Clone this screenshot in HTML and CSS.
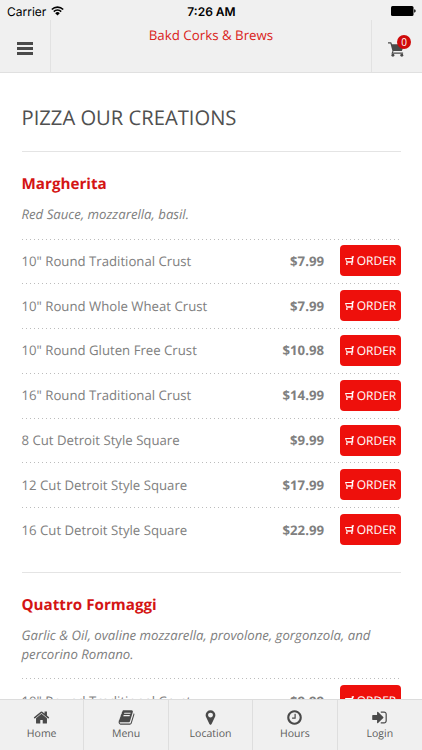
FILE: index.html
```html
<!DOCTYPE html>
<html lang="en">
<head>
    <meta charset="UTF-8">
    <meta name="viewport" content="width=device-width, initial-scale=1.0">
    <title>Bakd Corks &amp; Brews</title>
    <link rel="stylesheet" href="styles.css">
</head>
<body>
    <svg class="sprite" aria-hidden="true">
        <symbol id="cart" viewBox="0 0 16 14">
            <path d="M0 .2h3l.8 1.9H15.5L13 8.3H5.2l-.6 1.6h9.6v1.2H3.2l1-2.6L2.3 1.4H0z"/>
            <circle cx="4.6" cy="12.5" r="1.4"/>
            <circle cx="13" cy="12.5" r="1.4"/>
        </symbol>
        <symbol id="cart-small" viewBox="0 0 9 9">
            <path d="M9 .2v1.2H8.2v5.3H1.3V5.9L0 2h6.7V.2zM1.3 3.1l.5 2.1h4.9V3.1z"/>
            <circle cx="1.9" cy="8" r=".9"/>
            <circle cx="6.9" cy="8" r=".9"/>
        </symbol>
    </svg>

    <!-- Status bar -->
    <div class="status">
        <div class="carrier">Carrier
            <svg class="wifi" viewBox="0 0 13 10">
                <path d="M.8 3.5a8 8 0 0 1 11.4 0M2.8 5.6a5.2 5.2 0 0 1 7.4 0"/>
                <path class="fill" d="M6.5 9.6 4.2 7.2a3.3 3.3 0 0 1 4.6 0z"/>
            </svg>
        </div>
        <div class="time">7:26 AM</div>
        <div class="power">
            <svg class="battery" viewBox="0 0 25 10">
                <rect x="0" y="0" width="22.5" height="10" rx="1.5"/>
                <path d="M23.2 3.3q1.5.3 1.5 1.7t-1.5 1.7z"/>
            </svg>
        </div>
    </div>

    <!-- Header -->
    <header class="header">
        <button class="header-btn menu-btn" aria-label="Menu"><span class="bars"></span></button>
        <div class="brand">Bakd Corks &amp; Brews</div>
        <button class="header-btn cart-btn" aria-label="Cart">
            <svg class="cart-icon"><use href="#cart"/></svg>
            <span class="badge">0</span>
        </button>
    </header>

    <main class="content">
        <h1>PIZZA OUR CREATIONS</h1>

        <section class="item">
            <h2>Margherita</h2>
            <p class="desc">Red Sauce, mozzarella, basil.</p>
            <div class="row"><span class="name">10" Round Traditional Crust</span><span class="price">$7.99</span><a class="order"><svg><use href="#cart-small"/></svg>ORDER</a></div>
            <div class="row"><span class="name">10" Round Whole Wheat Crust</span><span class="price">$7.99</span><a class="order"><svg><use href="#cart-small"/></svg>ORDER</a></div>
            <div class="row"><span class="name">10" Round Gluten Free Crust</span><span class="price">$10.98</span><a class="order"><svg><use href="#cart-small"/></svg>ORDER</a></div>
            <div class="row"><span class="name">16" Round Traditional Crust</span><span class="price">$14.99</span><a class="order"><svg><use href="#cart-small"/></svg>ORDER</a></div>
            <div class="row"><span class="name">8 Cut Detroit Style Square</span><span class="price">$9.99</span><a class="order"><svg><use href="#cart-small"/></svg>ORDER</a></div>
            <div class="row"><span class="name">12 Cut Detroit Style Square</span><span class="price">$17.99</span><a class="order"><svg><use href="#cart-small"/></svg>ORDER</a></div>
            <div class="row"><span class="name">16 Cut Detroit Style Square</span><span class="price">$22.99</span><a class="order"><svg><use href="#cart-small"/></svg>ORDER</a></div>
        </section>

        <section class="item">
            <h2>Quattro Formaggi</h2>
            <p class="desc">Garlic &amp; Oil, ovaline mozzarella, provolone, gorgonzola, and percorino Romano.</p>
            <div class="row"><span class="name">10" Round Traditional Crust</span><span class="price">$9.99</span><a class="order"><svg><use href="#cart-small"/></svg>ORDER</a></div>
        </section>
    </main>

    <!-- Bottom tabs -->
    <nav class="tabs">
        <a class="tab">
            <svg viewBox="0 0 1792 1792"><path d="M1472 992v480q0 26-19 45t-45 19h-384v-384h-256v384h-384q-26 0-45-19t-19-45v-480q0-1 .5-3t.5-3l575-474 575 474q1 2 1 6zm223-69l-62 74q-8 9-21 11h-3q-13 0-21-7l-692-577-692 577q-12 8-24 7-13-2-21-11l-62-74q-8-10-7-23.5t11-21.5l719-599q32-26 76-26t76 26l244 204v-195q0-14 9-23t23-9h192q14 0 23 9t9 23v408l219 182q10 8 11 21.5t-7 23.5z"/></svg>
            Home
        </a>
        <a class="tab">
            <svg viewBox="0 0 1792 1792"><path d="M1703 478q40 57 18 129l-275 906q-19 64-76.5 107.5t-122.5 43.5h-923q-77 0-148.5-53.5t-99.5-131.5q-24-67-2-127 0-4 3-27t4-37q1-8-3-21.5t-3-19.5q2-11 8-21t16.5-23.5 16.5-23.5q23-38 45-91.5t30-91.5q3-10 .5-30t-.5-28q3-11 17-28t17-23q21-36 42-92t25-90q1-9-2.5-32t.5-28q4-13 22-30.5t22-22.5q19-26 42.5-84.5t27.5-96.5q1-8-3-25.5t-2-26.5q2-8 9-18t18-23 17-21q8-12 16.5-30.5t15-35 16-36 19.5-32 26.5-23.5 36-11.5 47.5 5.5l-1 3q38-9 51-9h761q74 0 114 56t18 130l-274 906q-36 119-71.5 153.5t-128.5 34.5h-869q-27 0-38 15-11 16-1 43 24 70 144 70h923q29 0 56-15.5t35-41.5l300-987q7-22 5-57 38 15 59 43zm-1064 2q-4 13 2 22.5t20 9.5h608q13 0 25.5-9.5t16.5-22.5l21-64q4-13-2-22.5t-20-9.5h-608q-13 0-25.5 9.5t-16.5 22.5zm-83 256q-4 13 2 22.5t20 9.5h608q13 0 25.5-9.5t16.5-22.5l21-64q4-13-2-22.5t-20-9.5h-608q-13 0-25.5 9.5t-16.5 22.5z"/></svg>
            Menu
        </a>
        <a class="tab">
            <svg viewBox="0 0 1792 1792"><path d="M1152 640q0-106-75-181t-181-75-181 75-75 181 75 181 181 75 181-75 75-181zm256 0q0 109-33 179l-364 774q-16 33-47.5 52t-67.5 19-67.5-19-46.5-52l-365-774q-33-70-33-179 0-212 150-362t362-150 362 150 150 362z"/></svg>
            Location
        </a>
        <a class="tab">
            <svg viewBox="0 0 1792 1792"><path d="M1024 544v448q0 14-9 23t-23 9h-320q-14 0-23-9t-9-23v-64q0-14 9-23t23-9h224v-352q0-14 9-23t23-9h64q14 0 23 9t9 23zm416 352q0-148-73-273t-198-198-273-73-273 73-198 198-73 273 73 273 198 198 273 73 273-73 198-198 73-273zm224 0q0 209-103 385.5t-279.5 279.5-385.5 103-385.5-103-279.5-279.5-103-385.5 103-385.5 279.5-279.5 385.5-103 385.5 103 279.5 279.5 103 385.5z"/></svg>
            Hours
        </a>
        <a class="tab">
            <svg viewBox="0 0 1792 1792"><path d="M1312 896q0 26-19 45l-544 544q-19 19-45 19t-45-19-19-45v-288h-448q-26 0-45-19t-19-45v-384q0-26 19-45t45-19h448v-288q0-26 19-45t45-19 45 19l544 544q19 19 19 45zm352-352v704q0 119-84.5 203.5t-203.5 84.5h-320q-13 0-22.5-9.5t-9.5-22.5q0-4-1-20t-.5-26.5 3-23.5 10-19.5 20.5-6.5h320q66 0 113-47t47-113v-704q0-66-47-113t-113-47h-312l-11.5-1-11.5-3-8-5.5-7-9-2-13.5q0-4-1-20t-.5-26.5 3-23.5 10-19.5 20.5-6.5h320q119 0 203.5 84.5t84.5 203.5z"/></svg>
            Login
        </a>
    </nav>
</body>
</html>
```
FILE: styles.css
```css
* {
    box-sizing: border-box;
}
body {
    margin: 0;
    height: 750px;
    display: flex;
    flex-direction: column;
    overflow: hidden;
    background: #fff;
    color: #808080;
    font-family: "Open Sans", sans-serif;
    font-size: 13.2px;
    text-rendering: geometricPrecision;
}
.sprite {
    position: absolute;
    width: 0;
    height: 0;
}

/* status bar */
.status {
    flex: none;
    display: grid;
    grid-template-columns: 1fr auto 1fr;
    align-items: center;
    height: 20px;
    padding: 2px 6px 0 7px;
    background: #f0f0f0;
    color: #000;
    font-family: Inter, sans-serif;
    font-size: 12px;
}
.carrier {
    display: flex;
    align-items: center;
    gap: 5px;
}
.wifi {
    width: 13px;
    height: 10px;
    fill: none;
    stroke: #000;
    stroke-width: 1.6;
}
.wifi .fill {
    fill: #000;
    stroke: none;
}
.time {
    font-weight: 600;
}
.power {
    display: flex;
    justify-content: flex-end;
}
.battery {
    width: 25px;
    height: 10px;
}

/* header */
.header {
    flex: none;
    display: flex;
    height: 53px;
    background: #f0f0f0;
    border-bottom: 1px solid #e0e0e0;
}
.header-btn {
    width: 51px;
    padding: 0;
    border: 0;
    background: none;
    display: flex;
    align-items: center;
    justify-content: center;
}
.menu-btn {
    border-right: 1px solid #e2e2e2;
    padding-top: 5px;
}
.cart-btn {
    position: relative;
    border-left: 1px solid #e2e2e2;
    padding: 6px 2px 0 0;
}
.bars {
    width: 16px;
    height: 13px;
    border-top: 3px solid #4a4a4a;
    border-bottom: 3px solid #4a4a4a;
    background: linear-gradient(#4a4a4a, #4a4a4a) center / 100% 3px no-repeat;
}
.brand {
    flex: 1;
    padding-top: 6px;
    text-align: center;
    font-size: 13.3px;
    line-height: 18px;
    color: #da2320;
}
.cart-icon {
    width: 17px;
    height: 15px;
    fill: #4a4a4a;
}
.badge {
    position: absolute;
    top: 15px;
    right: 11px;
    width: 14px;
    height: 14px;
    border-radius: 50%;
    background: #cf0a0a;
    color: #fff;
    font: 10px/14px "Open Sans", sans-serif;
    text-align: center;
}

/* menu list */
.content {
    flex: 1;
    min-height: 0;
    overflow: hidden;
    padding: 30px 21px 0 21.5px;
}
h1 {
    margin: 0;
    padding-bottom: 20px;
    font-size: 20.2px;
    font-weight: 400;
    line-height: 28px;
    color: #505050;
}
.item {
    border-top: 1px solid #e4e4e4;
    padding: 20px 0 20.4px;
}
h2 {
    margin: 0 0 9px;
    font-size: 15.2px;
    font-weight: 700;
    line-height: 24px;
    color: #d41414;
}
.desc {
    margin: 0 0 15px;
    font-size: 13.2px;
    font-style: italic;
    line-height: 18.5px;
}
.row {
    display: flex;
    align-items: center;
    height: 44.8px;
    background: repeating-linear-gradient(90deg, #bcbcbc 0 1.5px, transparent 1.5px 4px) top / 100% 1px no-repeat;
}
.name {
    flex: 1;
}
.price {
    margin-right: 16px;
    font-weight: 700;
}
.order {
    display: flex;
    align-items: center;
    justify-content: center;
    gap: 3px;
    width: 61px;
    height: 31px;
    border-radius: 4px;
    background: #ee100c;
    color: #fff;
    font-size: 12px;
}
.order svg {
    width: 9px;
    height: 9px;
    fill: #fff;
}

/* bottom tabs */
.tabs {
    flex: none;
    display: grid;
    grid-template-columns: repeat(5, 1fr);
    height: 51px;
    background: #f0f0f0;
    border-top: 1px solid #dcdcdc;
}
.tab {
    display: flex;
    flex-direction: column;
    align-items: center;
    padding-top: 9px;
    border-right: 1px solid #dedede;
    font-size: 10.5px;
    line-height: 14px;
    color: #5c5c5c;
}
.tab:last-child {
    border-right: 0;
}
.tab svg {
    width: 17px;
    height: 17px;
    margin-bottom: 1px;
    fill: #4a4a4a;
}
```
